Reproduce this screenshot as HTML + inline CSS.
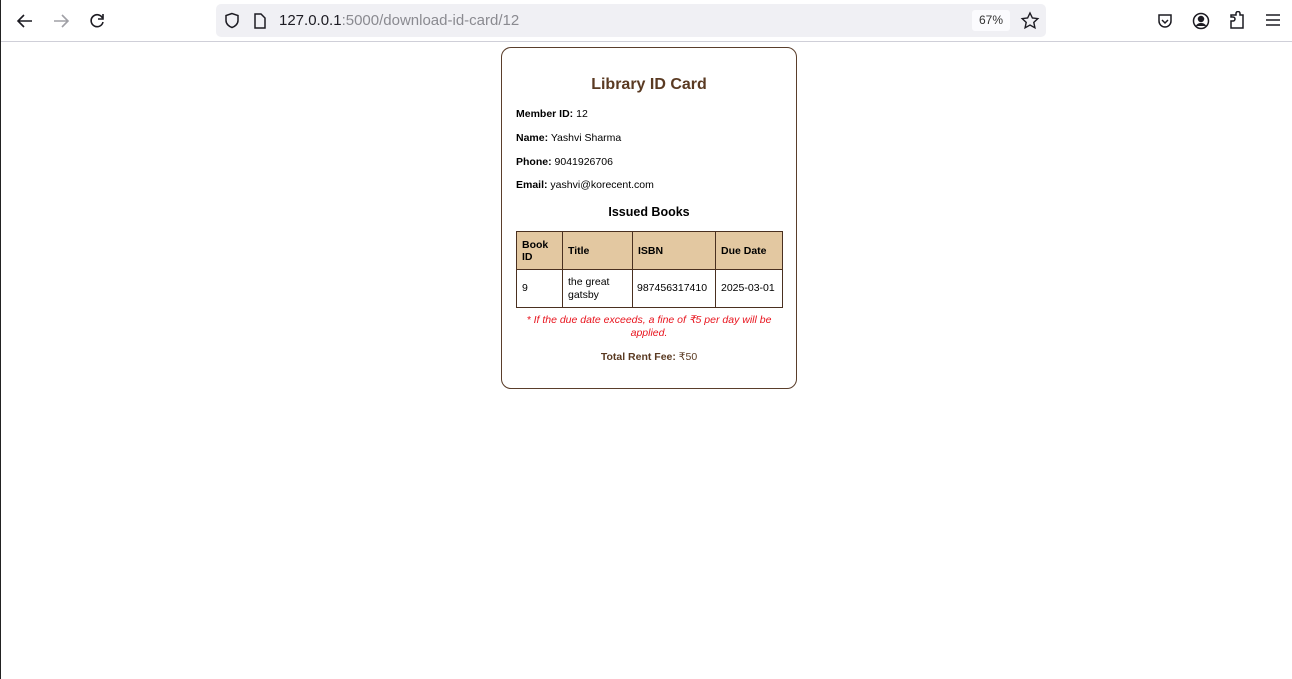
<!DOCTYPE html>
<html><head><meta charset="utf-8"><style>
*{margin:0;padding:0;box-sizing:border-box}
body{width:1292px;height:679px;overflow:hidden;background:#fff;font-family:"Liberation Sans",sans-serif;position:relative}
.lb{position:absolute;left:0;top:0;width:1px;height:679px;background:#222}
.bar{position:absolute;left:0;top:0;width:1292px;height:42px;background:#fff;border-bottom:1px solid #cfcfd8}
.url{position:absolute;left:216px;top:4px;width:830px;height:33px;background:#f0f0f4;border-radius:5px}
.url span.t{position:absolute;left:63px;top:8px;font-size:15px;color:#1c1b22}
.url span.t i{font-style:normal;color:#8a8a90}
.zoom{position:absolute;left:756px;top:6px;width:38px;height:21px;background:#fbfbfe;border-radius:3px;font-size:12px;color:#333;text-align:center;line-height:21px}
svg{position:absolute}
.card{position:absolute;left:501px;top:47px;width:296px;height:342px;border:1px solid #5a3e2b;border-radius:10px}
.abs{position:absolute;font-size:10.5px;color:#000;white-space:nowrap}
h1{position:absolute;left:0;width:294px;top:28px;text-align:center;font-size:16px;color:#5a3a22}
table{position:absolute;left:14px;top:183px;border-collapse:collapse;font-size:10.5px;table-layout:fixed;width:266px}
td,th{border:1px solid #4a3020;padding:0 5px;text-align:left;vertical-align:middle}
th{background:#e3c8a1;height:38px;font-weight:bold;line-height:12px}
td{height:38px;line-height:13px}
</style></head><body>
<div class="bar">
<svg style="left:16px;top:12px" width="18" height="18" viewBox="0 0 18 18" fill="none" stroke="#1c1b22" stroke-width="1.6"><path d="M16 9H2M8 3L2 9l6 6"/></svg>
<svg style="left:52px;top:12px" width="18" height="18" viewBox="0 0 18 18" fill="none" stroke="#a0a0a6" stroke-width="1.6"><path d="M2 9h14M10 3l6 6-6 6"/></svg>
<svg style="left:88px;top:12px" width="18" height="18" viewBox="0 0 18 18" fill="none" stroke="#1c1b22" stroke-width="1.6"><path d="M14.5 6A6 6 0 1 0 15 10"/><path d="M15 2v5h-5" fill="none"/></svg>
<div class="url">
<svg style="left:8px;top:8px" width="16" height="17" viewBox="0 0 16 17" fill="none" stroke="#1c1b22" stroke-width="1.5"><path d="M8 1.5L2 3.5v5c0 3.5 3 6 6 7 3-1 6-3.5 6-7v-5z"/></svg>
<svg style="left:37px;top:9px" width="14" height="16" viewBox="0 0 14 16" fill="none" stroke="#1c1b22" stroke-width="1.5"><path d="M2 1h6l4 4v10H2z"/></svg>
<span class="t">127.0.0.1<i>:5000/download-id-card/12</i></span>
<div class="zoom">67%</div>
<svg style="left:804px;top:7px" width="20" height="20" viewBox="0 0 20 20" fill="none" stroke="#1c1b22" stroke-width="1.4"><path d="M10 2l2.4 5 5.4.6-4 3.8 1.1 5.4L10 14l-4.9 2.8 1.1-5.4-4-3.8 5.4-.6z"/></svg>
</div>
<svg style="left:1156px;top:12px" width="18" height="18" viewBox="0 0 18 18" fill="none" stroke="#1c1b22" stroke-width="1.5"><path d="M3 3h12v6a6 6 0 0 1-12 0z"/><path d="M6 8l3 3 3-3"/></svg>
<svg style="left:1192px;top:12px" width="18" height="18" viewBox="0 0 18 18" fill="none" stroke="#1c1b22" stroke-width="1.5"><circle cx="9" cy="9" r="7.5"/><circle cx="9" cy="7" r="2.5" fill="#1c1b22"/><path d="M4.5 14c2-3 7-3 9 0" fill="#1c1b22"/></svg>
<svg style="left:1228px;top:11px" width="18" height="19" viewBox="0 0 18 19" fill="none" stroke="#1c1b22" stroke-width="1.5"><path d="M3 17V10h2a2 2 0 0 0 0-4H3V4h5V2.5a2 2 0 0 1 4 0V4h3v13z"/></svg>
<svg style="left:1265px;top:13px" width="16" height="14" viewBox="0 0 16 14" stroke="#1c1b22" stroke-width="1.5"><path d="M1 2h14M1 7h14M1 12h14"/></svg>
</div>
<div class="lb"></div>
<div class="card">
<h1>Library ID Card</h1>
<div class="abs" style="left:14px;top:60px"><b>Member ID:</b> 12</div>
<div class="abs" style="left:14px;top:84px"><b>Name:</b> Yashvi Sharma</div>
<div class="abs" style="left:14px;top:108px"><b>Phone:</b> 9041926706</div>
<div class="abs" style="left:14px;top:131px"><b>Email:</b> yashvi@korecent.com</div>
<div class="abs" style="left:0;width:294px;text-align:center;top:157px;font-size:12.5px;font-weight:bold">Issued Books</div>
<table>
<col style="width:46px"><col style="width:70px"><col style="width:83px"><col style="width:67px">
<tr><th>Book<br>ID</th><th>Title</th><th>ISBN</th><th>Due Date</th></tr>
<tr><td>9</td><td>the great<br>gatsby</td><td style="white-space:nowrap;padding:0 4px">987456317410</td><td style="white-space:nowrap;padding:0 5px">2025-03-01</td></tr>
</table>
<div class="abs" style="left:0;width:294px;text-align:center;top:266px;color:#e8141e;font-style:italic;font-size:10.5px;white-space:normal;line-height:13px">* If the due date exceeds, a fine of ₹5 per day will be<br>applied.</div>
<div class="abs" style="left:0;width:294px;text-align:center;top:303px;color:#5a3a22"><b>Total Rent Fee:</b> ₹50</div>
</div>
</body></html>
